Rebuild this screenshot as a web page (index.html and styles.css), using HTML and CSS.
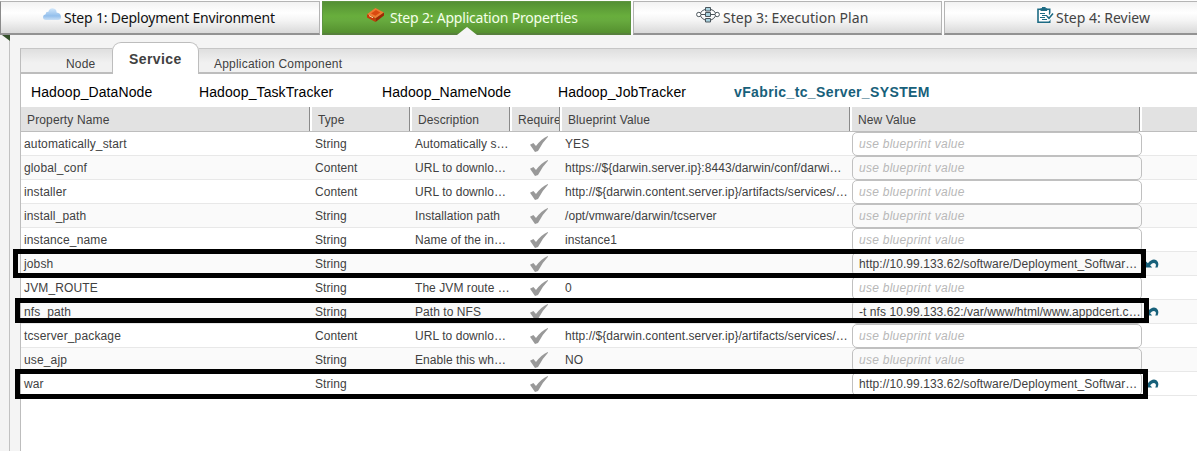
FILE: index.html
```html
<!DOCTYPE html>
<html lang="en">
<head>
<meta charset="utf-8">
<title>Application Properties</title>
<link rel="stylesheet" href="styles.css">
</head>
<body>
<svg class="defs" aria-hidden="true">
  <symbol id="check" viewBox="0 0 18 16"><path d="M0 8.8 L3.4 7 L6 10 Q11 3 17.8 0 L18 .8 Q12 7 8 15 L5 16 Z"/></symbol>
  <symbol id="undo" viewBox="0 0 14 9"><path d="M0 1.5 V8.4 H7.2 L5.1 6.3 Q8.5 2.6 10.6 5 Q11.4 6.4 10.2 8.4 H12.6 Q14.6 3.6 11.4 1.2 Q7.4 -1 2.9 4.2 Z"/></symbol>
</svg>
<nav class="steps">
  <div class="step first">
    <svg class="cloud" viewBox="0 0 18 13"><defs><linearGradient id="sky" x1="0" y1="0" x2="0" y2="1"><stop offset="0" stop-color="#d3e8fb"/><stop offset=".65" stop-color="#93bfec"/><stop offset="1" stop-color="#c9dff5"/></linearGradient></defs><path fill="url(#sky)" d="M3 12 Q0 12 0 9 Q0 6.8 2.6 6.2 Q2.6 3.6 5.4 3.8 Q6.2 0 9.8 .2 Q13.6 .6 13.6 4.6 Q17.8 5 18 9 Q18 12 15 12 Z"/></svg>
    <span>Step 1: Deployment Environment</span>
  </div>
  <div class="step active">
    <svg class="brick" viewBox="0 0 17 14"><path fill="#ef7a32" d="M0 6.2 L8.4 0 L17 4.4 L8.6 10.2 Z"/><path fill="#c63a08" d="M0 6.2 L8.6 10.2 V14 L0 9.4 Z"/><path fill="#9e2604" d="M17 4.4 L8.6 10.2 V14 L17 7.6 Z"/><path fill="#d94a10" d="M4 5.6 L9 2 L13.2 4.4 L8.4 7.8 Z"/><path stroke="#ffd0a0" fill="none" d="M2 7.6 L6 9.8"/></svg>
    <span>Step 2: Application Properties</span>
    <i class="notch"></i>
  </div>
  <div class="step">
    <svg class="graph" viewBox="0 0 24 16"><g fill="none" stroke="#4c565c"><path d="M4.5 6 Q6 3 9 2.5 M4.5 9 Q6 12 9 13 M15 2.5 Q18 3 19.5 6 M15 13 Q18 12 19.5 9 M5 7.5 H9 M15 7.5 H19"/><circle cx="2.8" cy="7.5" r="2.2" fill="#fff"/><circle cx="21.2" cy="7.5" r="2.2" fill="#fff"/><path fill="#a8d2df" d="M9.5 .5 h5 v3.5 h-5z M9.5 5.5 h5 v4 h-5z M9.5 11.5 h5 v3.5 h-5z"/></g></svg>
    <span>Step 3: Execution Plan</span>
  </div>
  <div class="step last">
    <svg class="clip" viewBox="0 0 17 17"><path fill="#fff" stroke="#1d6b84" stroke-width="1.6" d="M1 2.3 H12.7 V15.2 H1 Z"/><path fill="#1d6b84" d="M3.5 1.2 H5 V0 H8.6 V1.2 H10.2 V4 H3.5 Z"/><path fill="none" stroke="#1d6b84" d="M3 6.5 H8 M5 8.5 H10 M3 10.5 H8 M5 12.5 H10"/><path fill="none" stroke="#fff" stroke-width="4" d="M9.8 9 L12 11.3 L16 6.6"/><path fill="none" stroke="#1d6b84" stroke-width="1.6" d="M9.8 9 L12 11.3 L16 6.6"/></svg>
    <span>Step 4: Review</span>
  </div>
</nav>
<i class="fold"></i>
<main class="page">
  <section class="panel">
    <div class="tabs">
      <div class="tab node"><span>Node</span></div>
      <div class="tab selected"><span>Service</span></div>
      <div class="tab component"><span>Application Component</span></div>
    </div>
    <div class="services">
      <span class="s1">Hadoop_DataNode</span><span class="s2">Hadoop_TaskTracker</span><span class="s3">Hadoop_NameNode</span><span class="s4">Hadoop_JobTracker</span><span class="current">vFabric_tc_Server_SYSTEM</span>
    </div>
    <div class="table">
      <div class="row head"><div>Property Name</div><div>Type</div><div>Description</div><div>Require</div><div>Blueprint Value</div><div>New Value</div><div></div></div>
      <div class="row"><div>automatically_start</div><div>String</div><div>Automatically s…</div><div><svg class="check"><use href="#check"/></svg></div><div>YES</div><div class="field hint">use blueprint value</div><div></div></div>
      <div class="row"><div>global_conf</div><div>Content</div><div>URL to downlo…</div><div><svg class="check"><use href="#check"/></svg></div><div>https://${darwin.server.ip}:8443/darwin/conf/darwi…</div><div class="field hint">use blueprint value</div><div></div></div>
      <div class="row"><div>installer</div><div>Content</div><div>URL to downlo…</div><div><svg class="check"><use href="#check"/></svg></div><div>http://${darwin.content.server.ip}/artifacts/services/…</div><div class="field hint">use blueprint value</div><div></div></div>
      <div class="row"><div>install_path</div><div>String</div><div>Installation path</div><div><svg class="check"><use href="#check"/></svg></div><div>/opt/vmware/darwin/tcserver</div><div class="field hint">use blueprint value</div><div></div></div>
      <div class="row"><div>instance_name</div><div>String</div><div>Name of the in…</div><div><svg class="check"><use href="#check"/></svg></div><div>instance1</div><div class="field hint">use blueprint value</div><div></div></div>
      <div class="row"><div>jobsh</div><div>String</div><div></div><div><svg class="check"><use href="#check"/></svg></div><div></div><div class="field">http://10.99.133.62/software/Deployment_Softwar…</div><div><svg class="undo"><use href="#undo"/></svg></div></div>
      <div class="row"><div>JVM_ROUTE</div><div>String</div><div>The JVM route …</div><div><svg class="check"><use href="#check"/></svg></div><div>0</div><div class="field hint">use blueprint value</div><div></div></div>
      <div class="row"><div>nfs_path</div><div>String</div><div>Path to NFS</div><div><svg class="check"><use href="#check"/></svg></div><div></div><div class="field">-t nfs 10.99.133.62:/var/www/html/www.appdcert.c…</div><div><svg class="undo"><use href="#undo"/></svg></div></div>
      <div class="row"><div>tcserver_package</div><div>Content</div><div>URL to downlo…</div><div><svg class="check"><use href="#check"/></svg></div><div>http://${darwin.content.server.ip}/artifacts/services/…</div><div class="field hint">use blueprint value</div><div></div></div>
      <div class="row"><div>use_ajp</div><div>String</div><div>Enable this wh…</div><div><svg class="check"><use href="#check"/></svg></div><div>NO</div><div class="field hint">use blueprint value</div><div></div></div>
      <div class="row"><div>war</div><div>String</div><div></div><div><svg class="check"><use href="#check"/></svg></div><div></div><div class="field">http://10.99.133.62/software/Deployment_Softwar…</div><div><svg class="undo"><use href="#undo"/></svg></div></div>
    </div>
  </section>
</main>
<i class="mark mark-jobsh"></i>
<i class="mark mark-nfs"></i>
<i class="mark mark-war"></i>
</body>
</html>
```
FILE: styles.css
```css
* { box-sizing: border-box; }
body {
  margin: 0; width: 1197px; height: 451px; overflow: hidden; position: relative;
  display: flex; flex-direction: column;
  background: #f4f4f4; color: #414141;
  font: 12px/16px "Liberation Sans", Arial, sans-serif;
}
.defs { position: absolute; width: 0; height: 0; }

.steps { display: grid; grid-template-columns: 320px 310px 310px 254px; column-gap: 1px; padding-top: 1px; height: 35px; flex: none; background: #fdfdfd; }
.step {
  position: relative; display: flex; align-items: flex-start; height: 34px;
  border: 1px solid #b4b4b4; border-bottom: 2px solid #929292;
  background: linear-gradient(#f2f2f2, #fff 35%, #f4f4f4 60%, #d9d9d9);
  font: 14px/20px "Noto Sans", "Open Sans", sans-serif; color: #434343; white-space: nowrap;
}
.step.first { color: #111; border-left-color: #8b8b8b; letter-spacing: -.2px; }
.step.active { margin-left: 1px; letter-spacing: -.2px; border-color: #5d9440; border-bottom-color: #57803c; background: linear-gradient(#549034, #68ae3c 45%, #67aa3e 60%, #55902f); color: #f4ffe9; }
.step:nth-child(3) { margin-left: 1px; letter-spacing: .04px; }
.step.last { margin-left: 1px; border-right: 0; }
.step span { margin-top: 6px; }
.step svg { flex: none; }
.cloud { width: 18px; height: 13px; margin: 6px 3px 0 42px; }
.brick { width: 17px; height: 14px; margin: 6px 6px 0 44px; }
.graph { width: 24px; height: 16px; margin: 5px 3px 0 62px; }
.clip { width: 17px; height: 17px; margin: 5px 2px 0 92px; }
.notch { position: absolute; left: 134px; bottom: -2px; border: 10px solid transparent; border-top: 0; border-bottom: 8px solid #f5f5f5; }
.fold { position: absolute; left: 2px; top: 35px; border-top: 6px solid #34502a; border-left: 8px solid transparent; }

.page { flex: 1; margin-left: 9px; padding: 7px 0 0 10px; border-left: 1px solid #c2c2c2; }
.panel { height: 409px; display: flex; flex-direction: column; background: linear-gradient(transparent 32px, #fff 32px); }
.tabs { display: flex; align-items: flex-end; height: 32px; flex: none; font-size: 12px; }
.tab { height: 26px; border-top: 1px solid #c6c6c6; border-bottom: 2px solid #bdbdbd; background: linear-gradient(#dfdfdf, #f1f1f1 60%); padding-top: 7px; letter-spacing: .2px; }
.tab.node { width: 92px; padding-left: 45px; border-left: 1px solid #bdbdbd; }
.tab.selected { width: 87px; height: 32px; padding: 8px 0 0 16px; border: 1px solid #bdbdbd; border-bottom: 0; border-radius: 9px 9px 0 0; background: #fff; font-weight: bold; font-size: 14px; letter-spacing: .4px; }
.tab.component { flex: 1; padding-left: 15px; }
.services { display: flex; height: 33px; flex: none; padding: 10px 0 0 10px; border-left: 1px solid #bdbdbd; font-size: 14px; letter-spacing: .1px; color: #000; white-space: nowrap; }
.services span { flex: none; }
.s1 { width: 168px; }
.s2 { width: 183px; }
.s3 { width: 176px; }
.s4 { width: 176px; }
.services .current { color: #17607a; font-weight: bold; letter-spacing: .38px; }

.table { flex: 1; border-left: 1px solid #bdbdbd; }
.row { display: grid; grid-template-columns: 291px 100px 100px 50px 290px 290px 1fr; height: 24px; border-bottom: 1px solid #e8e8e8; white-space: nowrap; letter-spacing: .06px; }
.row:nth-child(odd) { background: #fafafa; }
.row > div { padding: 4px 0 0 3px; overflow: hidden; }
.row > div:first-child { letter-spacing: .14px; }
.row > div:nth-child(4) { padding: 4px 0 0 18px; }
.row.head { height: 25px; background: #fff; border-bottom-color: #bdbdbd; letter-spacing: .1px; }
.row.head > div { margin-right: 2px; padding: 5px 0 0 6px; background: #e2e2e2; border-right: 1px solid #8a8a8a; }
.row.head > div:last-child { margin: 0; border: 0; }
.row > .field { height: 24px; padding: 3px 0 0 6px; border: 1px solid #c0c0c0; border-radius: 5px; }
.row > .hint { color: #b8b8b8; font-style: italic; letter-spacing: .26px; }
.check { display: block; width: 18px; height: 16px; fill: #999; }
.row .undo { display: block; width: 14px; height: 9px; margin-top: -1px; fill: #17607a; transform: translateY(4px); }

.mark { position: absolute; border: 5px solid #000; }
.mark-jobsh { left: 13px; top: 249px; width: 1133px; height: 29px; }
.mark-nfs { left: 15px; top: 298px; width: 1134px; height: 25px; }
.mark-war { left: 15px; top: 369px; width: 1133px; height: 30px; }
```
